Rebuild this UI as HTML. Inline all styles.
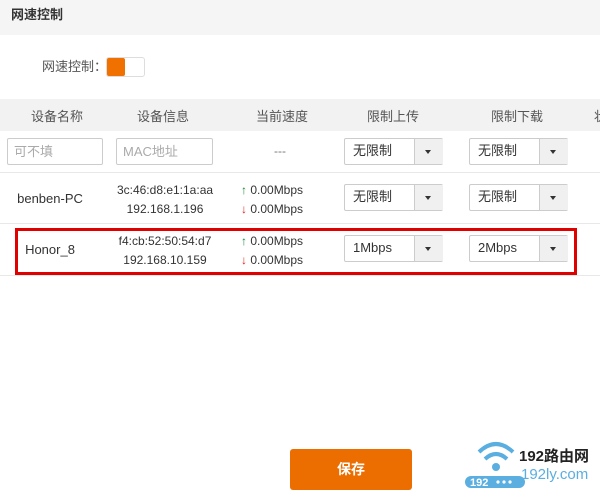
<!DOCTYPE html>
<html><head><meta charset="utf-8"><style>
*{margin:0;padding:0;box-sizing:border-box}
body{width:600px;height:502px;background:#fff;font-family:"Liberation Sans","Noto Sans CJK SC",sans-serif;color:#333;font-size:12px;position:relative;overflow:hidden}
.a{position:absolute}
.hdr{left:0;top:0;width:600px;height:35px;background:#f5f5f5;font-size:13px;font-weight:bold;padding:0 0 0 11px;line-height:30px;color:#333}
.th{left:0;top:99px;width:600px;height:32px;background:#f2f2f2}
.c{position:absolute;text-align:center;transform:translateX(-50%);white-space:nowrap}
.inp{position:absolute;height:27px;border:1px solid #ccc;border-radius:2px;color:#aaa;padding:0 0 0 6px;line-height:25px;font-size:13px}
.sel{position:absolute;width:99px;height:27px;border:1px solid #ccc;border-radius:2px;background:#fff;font-size:13px;padding:0 0 0 8px;line-height:24px}
.sel:after{content:"";position:absolute;left:69px;top:0;width:28px;height:25px;background:#f0f0f0;border-left:1px solid #ccc}
.sel i{position:absolute;left:80px;top:11px;width:0;height:0;border-left:3px solid transparent;border-right:3px solid transparent;border-top:4px solid #333;z-index:1}
.line{position:absolute;left:0;width:600px;height:1px;background:#e8e8e8}
.up{color:#1a8a3a}.dn{color:#e02020}
</style></head><body>
<div class="a hdr">网速控制</div>
<div class="a" style="left:42px;top:58px;font-size:13px;color:#555;line-height:18px">网速控制：</div>
<div class="a" style="left:106px;top:57px;width:39px;height:20px;border:1px solid #ddd;border-radius:3px;background:#fff"></div>
<div class="a" style="left:107px;top:58px;width:18px;height:18px;background:#f07000;border-radius:2px"></div>
<div class="a th"></div>
<div class="c" style="left:57px;top:106px;font-size:13px;color:#555">设备名称</div>
<div class="c" style="left:163px;top:106px;font-size:13px;color:#555">设备信息</div>
<div class="c" style="left:282px;top:106px;font-size:13px;color:#555">当前速度</div>
<div class="c" style="left:393px;top:106px;font-size:13px;color:#555">限制上传</div>
<div class="c" style="left:517px;top:106px;font-size:13px;color:#555">限制下载</div>
<div class="a" style="left:594px;top:106px;font-size:13px;color:#555">状</div>
<div class="inp" style="left:7px;top:138px;width:96px">可不填</div>
<div class="inp" style="left:116px;top:138px;width:97px">MAC地址</div>
<div class="c" style="left:280px;top:144px;color:#777">---</div>
<div class="sel" style="left:344px;top:138px">无限制<i></i></div>
<div class="sel" style="left:469px;top:138px">无限制<i></i></div>
<div class="line" style="top:172px"></div>
<div class="c" style="left:50px;top:191px;font-size:13px">benben-PC</div>
<div class="c" style="left:165px;top:181px;line-height:19px">3c:46:d8:e1:1a:aa<br>192.168.1.196</div>
<div class="a" style="left:241px;top:181px;line-height:19px"><span class="up">↑</span> 0.00Mbps<br><span class="dn">↓</span> 0.00Mbps</div>
<div class="sel" style="left:344px;top:184px">无限制<i></i></div>
<div class="sel" style="left:469px;top:184px">无限制<i></i></div>
<div class="line" style="top:223px"></div>
<div class="line" style="top:275px"></div>
<div class="a" style="left:15px;top:228px;width:562px;height:47px;border:3px solid #e00000"></div>
<div class="c" style="left:50px;top:242px;font-size:13px">Honor_8</div>
<div class="c" style="left:165px;top:232px;line-height:19px">f4:cb:52:50:54:d7<br>192.168.10.159</div>
<div class="a" style="left:241px;top:232px;line-height:19px"><span class="up">↑</span> 0.00Mbps<br><span class="dn">↓</span> 0.00Mbps</div>
<div class="sel" style="left:344px;top:235px">1Mbps<i></i></div>
<div class="sel" style="left:469px;top:235px">2Mbps<i></i></div>
<div class="a" style="left:290px;top:449px;width:122px;height:41px;background:#ec6e00;border-radius:3px;color:#fff;font-weight:bold;font-size:14px;text-align:center;line-height:41px">保存</div>
<svg class="a" style="left:465px;top:436px" width="60" height="52" viewBox="0 0 60 52">
<path d="M14 16 Q31 0 48 16" stroke="#5aaee0" stroke-width="4" fill="none"/>
<path d="M20 23 Q31 13 42 23" stroke="#5aaee0" stroke-width="4" fill="none"/>
<circle cx="31" cy="31" r="4" fill="#5aaee0"/>
<rect x="0" y="40" width="60" height="12" rx="6" fill="#5aaee0"/>
<text x="5" y="50" font-size="11" font-weight="bold" fill="#fff" font-family="Liberation Sans">192</text>
<circle cx="33" cy="46" r="1.6" fill="#fff"/><circle cx="39" cy="46" r="1.6" fill="#fff"/><circle cx="45" cy="46" r="1.6" fill="#fff"/>
</svg>
<div class="a" style="left:519px;top:445px;font-size:15px;font-weight:bold;color:#222">192路由网</div>
<div class="a" style="left:521px;top:466px;font-size:15px;color:#5aaee0">192ly.com</div>
</body></html>
